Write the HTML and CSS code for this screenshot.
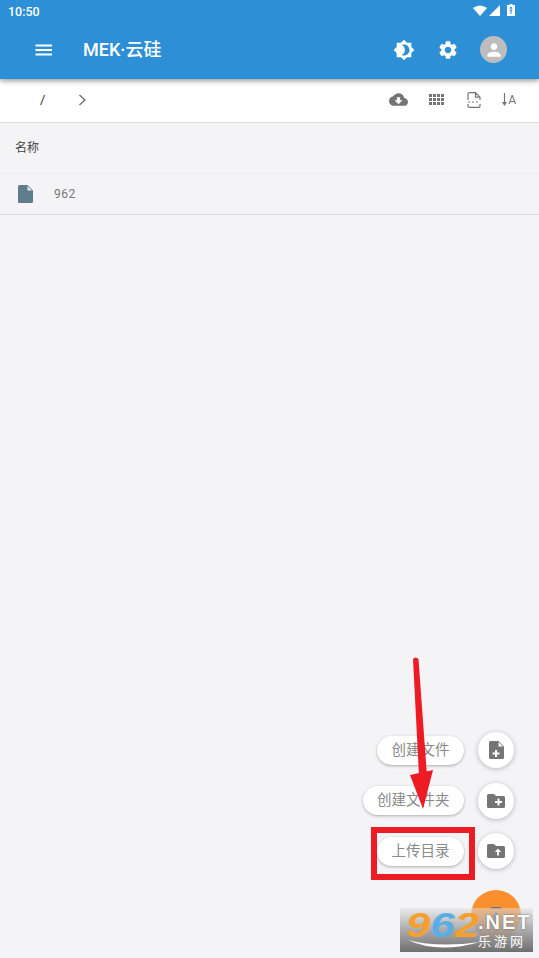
FILE: index.html
```html
<!DOCTYPE html>
<html>
<head>
    <title>MEK云硅</title>
    <link rel="stylesheet" href="styles.css">
</head>
<body>
    <div class="app">
        <header class="appbar">
            <div class="statusbar">
                <span class="time">10:50</span>
                <div class="status-icons">
                    <svg width="14" height="11" viewBox="0 0 14 11"><path d="M0 3Q7-2 14 3L7 11Z" fill="#fff"/></svg>
                    <svg class="signal" width="11" height="11" viewBox="0 0 11 11"><path d="M11 0V11H0Z" fill="#fff"/></svg>
                    <svg width="8" height="12" viewBox="0 0 8 12"><path d="M2.500 0H5.500V1H8V12H0V1H2.500Z" fill="#fff"/><path d="M4 3V10M2.800 4.800L4 3L5.200 4.800M2.800 6.800H5.200" stroke="#2d8fd5" fill="none"/></svg>
                </div>
            </div>
            <div class="toolbar">
                <svg class="menu" width="18" height="12" viewBox="0 0 18 12"><path d="M.500 1.500H17M.500 6H17M.500 10.500H17" stroke="#fff" stroke-width="1.800"/></svg>
                <span class="title">MEK·云硅</span>
                <div class="toolbar-icons">
                    <svg width="22" height="22" viewBox="0 0 24 24"><path d="M20 8.690V4h-4.690L12 .690 8.690 4H4v4.690L.690 12 4 15.310V20h4.690L12 23.310 15.310 20H20v-4.690L23.310 12 20 8.690zM12 18c-.890 0-1.740-.200-2.500-.550C11.560 16.500 13 14.420 13 12s-1.440-4.500-3.500-5.450C10.260 6.200 11.110 6 12 6c3.310 0 6 2.690 6 6s-2.690 6-6 6z" fill="#fff"/></svg>
                    <svg width="22" height="22" viewBox="0 0 24 24"><path d="M19.140 12.940c.040-.300.060-.610.060-.940 0-.320-.020-.640-.070-.940l2.030-1.580c.180-.140.230-.410.120-.610l-1.920-3.320c-.120-.220-.370-.290-.590-.220l-2.390.960c-.500-.380-1.030-.700-1.620-.940l-.360-2.540c-.040-.240-.240-.410-.480-.410h-3.840c-.240 0-.430.170-.470.410l-.360 2.540c-.590.240-1.130.570-1.620.940l-2.390-.960c-.220-.080-.470 0-.590.220L2.740 8.870c-.120.210-.080.470.120.610l2.030 1.580c-.050.300-.090.630-.090.940s.020.640.070.940l-2.030 1.580c-.180.140-.230.410-.120.610l1.920 3.320c.120.220.370.290.590.220l2.390-.960c.500.380 1.030.700 1.620.940l.360 2.540c.050.240.240.410.480.410h3.840c.240 0 .440-.170.470-.410l.360-2.540c.590-.240 1.130-.560 1.620-.940l2.390.960c.220.080.470 0 .590-.220l1.920-3.320c.120-.220.070-.470-.120-.610l-2.010-1.580zM12 15.600c-1.980 0-3.600-1.620-3.600-3.600s1.620-3.600 3.600-3.600 3.600 1.620 3.600 3.600-1.620 3.600-3.600 3.600z" fill="#fff"/></svg>
                    <div class="avatar">
                        <svg width="20" height="20" viewBox="0 0 24 24"><path d="M12 12c2.210 0 4-1.790 4-4s-1.790-4-4-4-4 1.790-4 4 1.790 4 4 4zm0 2c-2.670 0-8 1.340-8 4v2h16v-2c0-2.660-5.330-4-8-4z" fill="#fff"/></svg>
                    </div>
                </div>
            </div>
        </header>

        <div class="pathbar">
            <span class="slash">/</span>
            <svg class="chevron" width="9" height="12" viewBox="0 0 9 12"><path d="M1.500 1L6.800 6L1.500 11" fill="none" stroke="#757575" stroke-width="1.500"/></svg>
            <div class="path-icons">
                <svg width="19" height="19" viewBox="0 0 24 24"><path d="M19.350 10.040C18.670 6.590 15.640 4 12 4 9.110 4 6.600 5.640 5.350 8.040 2.340 8.360 0 10.910 0 14c0 3.310 2.690 6 6 6h13c2.760 0 5-2.240 5-5 0-2.640-2.050-4.780-4.650-4.960zM17 13l-5 5-5-5h3V9h4v4h3z" fill="#757575"/></svg>
                <svg class="grid-icon" width="15" height="11" viewBox="0 0 15 11"><path d="M0 0h3v3H0zM4 0h3v3H4zM8 0h3v3H8zM12 0h3v3h-3zM0 4h3v3H0zM4 4h3v3H4zM8 4h3v3H8zM12 4h3v3h-3zM0 8h3v3H0zM4 8h3v3H4zM8 8h3v3H8zM12 8h3v3h-3z" fill="#757575"/></svg>
                <svg width="14" height="16" viewBox="0 0 14 16"><path d="M1 8V2Q1 .700 2.300 .700H8.500L13 5.200V8M8.500 .700V5.200H13M1 12V14Q1 15.300 2.300 15.300H11.700Q13 15.300 13 14V12" fill="none" stroke="#757575" stroke-width="1.200"/><path d="M1 10H3M5 10H7M9 10H11" stroke="#757575" stroke-width="1.200"/></svg>
                <div class="sort-icon">
                    <svg width="5" height="13" viewBox="0 0 5 13"><path d="M2.500 0V10" stroke="#757575" stroke-width="1.200"/><path d="M0 9H5L2.500 13Z" fill="#757575"/></svg>
                    <span>A</span>
                </div>
            </div>
        </div>

        <div class="list-head">名称</div>
        <div class="file-row">
            <svg width="15" height="18" viewBox="0 0 15 18"><path d="M1.500 0H9.500L15 5.500V16.500Q15 18 13.500 18H1.500Q0 18 0 16.500V1.500Q0 0 1.500 0Z" fill="#607d8b"/><path d="M9.500 1V5.500H14Z" fill="#e6e9ed"/></svg>
            <span class="file-name">962</span>
        </div>

        <div class="fab-menu">
            <div class="fab-row">
                <div class="fab-label">创建文件</div>
                <div class="fab-mini">
                    <svg width="15" height="18" viewBox="0 0 15 18"><path d="M1.500 0H9.500L15 5.500V16.500Q15 18 13.500 18H1.500Q0 18 0 16.500V1.500Q0 0 1.500 0Z" fill="#757575"/><path d="M9.500 1V5.500H14Z" fill="#fff"/><path d="M7 9V16M3.500 12.500H10.500" stroke="#fff" stroke-width="2"/></svg>
                </div>
            </div>
            <div class="fab-row">
                <div class="fab-label">创建文件夹</div>
                <div class="fab-mini">
                    <svg width="18" height="14" viewBox="0 0 18 14"><path d="M1.500 0H7L9 2H16.500Q18 2 18 3.500V12.500Q18 14 16.500 14H1.500Q0 14 0 12.500V1.500Q0 0 1.500 0Z" fill="#757575"/><path d="M11.500 4.500V11.500M8 8H15" stroke="#fff" stroke-width="2"/></svg>
                </div>
            </div>
            <div class="fab-row">
                <div class="fab-label">上传目录</div>
                <div class="fab-mini">
                    <svg width="18" height="14" viewBox="0 0 18 14"><path d="M1.500 0H7L9 2H16.500Q18 2 18 3.500V12.500Q18 14 16.500 14H1.500Q0 14 0 12.500V1.500Q0 0 1.500 0Z" fill="#757575"/><path d="M11 11.500V7.500" stroke="#fff" stroke-width="2"/><path d="M7.800 8L11 4.500L14.200 8Z" fill="#fff"/></svg>
                </div>
            </div>
            <div class="fab-main">
                <svg width="14" height="16" viewBox="0 0 14 16"><path d="M2 1H12" stroke="#757575" stroke-width="2"/><path d="M2 10L7 4.500L12 10H9V16H5V10Z" fill="#757575"/></svg>
            </div>
        </div>

        <!-- annotation drawn on top of the screenshot -->
        <svg class="arrow" width="24" height="155" viewBox="0 0 24 155"><path d="M3 3Q5.500 0 8.500 3L17 120H9Z" fill="#ed1c24"/><path d="M0 119L23 114L13 153Z" fill="#ed1c24"/></svg>
        <div class="red-box"></div>

        <div class="watermark">
            <span class="wm-num"><i class="o">9</i><i class="b">6</i><i class="o">2</i></span>
            <svg class="wm-swoosh" width="72" height="12" viewBox="0 0 72 12"><path d="M0 1Q30 15 72 3Q30 9 0 1Z" fill="#fff"/></svg>
            <div class="wm-right">
                <span class="wm-net">.NET</span>
                <span class="wm-cn">乐游网</span>
            </div>
        </div>
    </div>
</body>
</html>
```

FILE: styles.css
```css
html, body { margin: 0; padding: 0; }
body { font-family: Roboto, "Noto Sans CJK SC", sans-serif; background: #f4f4f7; }
.app { position: relative; width: 539px; height: 958px; overflow: hidden; background: #f4f4f7; }

.appbar { background: #2d8fd5; color: white; height: 79px; box-shadow: 0 2px 5px rgba(0,0,0,0.4); position: relative; z-index: 2; }
.statusbar { height: 22px; display: flex; align-items: center; justify-content: space-between; padding: 0 24px 0 8px; }
.time { font-size: 12.500px; font-weight: 500; }
.status-icons { display: flex; align-items: center; padding-bottom: 2px; }
.signal { margin: 0 7px 0 2px; }
.toolbar { height: 55px; display: flex; align-items: center; padding-left: 35px; }
.menu { margin-right: 30px; }
.title { font-size: 18px; font-weight: 500; padding-bottom: 3px; }
.toolbar-icons { margin-left: auto; display: flex; align-items: center; gap: 21.500px; padding-right: 32px; }
.avatar { width: 27px; height: 27px; border-radius: 50%; background: #bdbdbd; display: flex; align-items: center; justify-content: center; }

.pathbar { height: 41px; padding-bottom: 2px; background: white; border-bottom: 1px solid #dcdcdc; display: flex; align-items: center; padding-left: 40px; }
.slash { font-size: 13px; color: #333; width: 38px; }
.path-icons { margin-left: auto; display: flex; align-items: center; gap: 21px; padding-right: 23px; }
.grid-icon { margin-right: 2px; }
.sort-icon { display: flex; align-items: center; gap: 1px; }
.sort-icon span { font-size: 12px; color: #757575; }

.list-head { height: 46px; padding-bottom: 4px; display: flex; align-items: center; padding-left: 15px; font-size: 12px; color: #444; border-bottom: 1px solid #ececef; }
.file-row { height: 40px; display: flex; align-items: center; padding-left: 18px; gap: 21px; border-bottom: 1px solid #dcdcdc; }
.file-name { font-size: 12px; color: #777; letter-spacing: 0.5px; }

.fab-menu { position: absolute; right: 25px; top: 732px; display: flex; flex-direction: column; align-items: flex-end; gap: 14.500px; }
.fab-row { display: flex; align-items: center; gap: 14px; height: 36px; }
.fab-label { height: 29px; line-height: 29px; padding: 0 14.500px; background: white; border-radius: 15px; font-size: 14.500px; color: #8a8a8a; box-shadow: 0 1px 3px rgba(0,0,0,0.3); }
.fab-mini { width: 36px; height: 36px; border-radius: 50%; background: white; display: flex; align-items: center; justify-content: center; box-shadow: 0 1px 5px rgba(0,0,0,0.25); }
.fab-main { width: 50px; height: 50px; margin-top: 6px; margin-right: -7px; border-radius: 50%; background: #fb8f2f; display: flex; align-items: center; justify-content: center; }

.arrow { position: absolute; left: 410px; top: 656px; z-index: 3; }
.red-box { position: absolute; left: 371px; top: 827px; width: 92px; height: 41px; border: 6px solid #ed1c24; z-index: 3; }

.watermark { position: absolute; left: 400px; top: 908px; width: 133px; height: 44px; z-index: 4; background: linear-gradient(180deg, rgba(225,225,225,0.5), rgba(165,165,165,0.85) 45%, #6f6f6f); }
.wm-num { position: absolute; left: 6px; top: -3px; font-family: "Liberation Sans", sans-serif; font-size: 35px; font-weight: bold; transform: scaleX(1.250); transform-origin: left; }
.wm-num i { font-style: italic; }
.wm-num .o { color: #f5a02e; }
.wm-num .b { color: #5aaee8; }
.wm-swoosh { position: absolute; left: 8px; top: 31px; }
.wm-right { position: absolute; left: 78px; top: 4px; display: flex; flex-direction: column; align-items: flex-start; color: white; }
.wm-net { font-family: "Liberation Sans", sans-serif; font-size: 20px; font-weight: bold; line-height: 20px; letter-spacing: 2px; text-shadow: 0 0 2px #555; }
.wm-cn { font-size: 13px; line-height: 16px; letter-spacing: 3px; margin-top: 2px; }
```
